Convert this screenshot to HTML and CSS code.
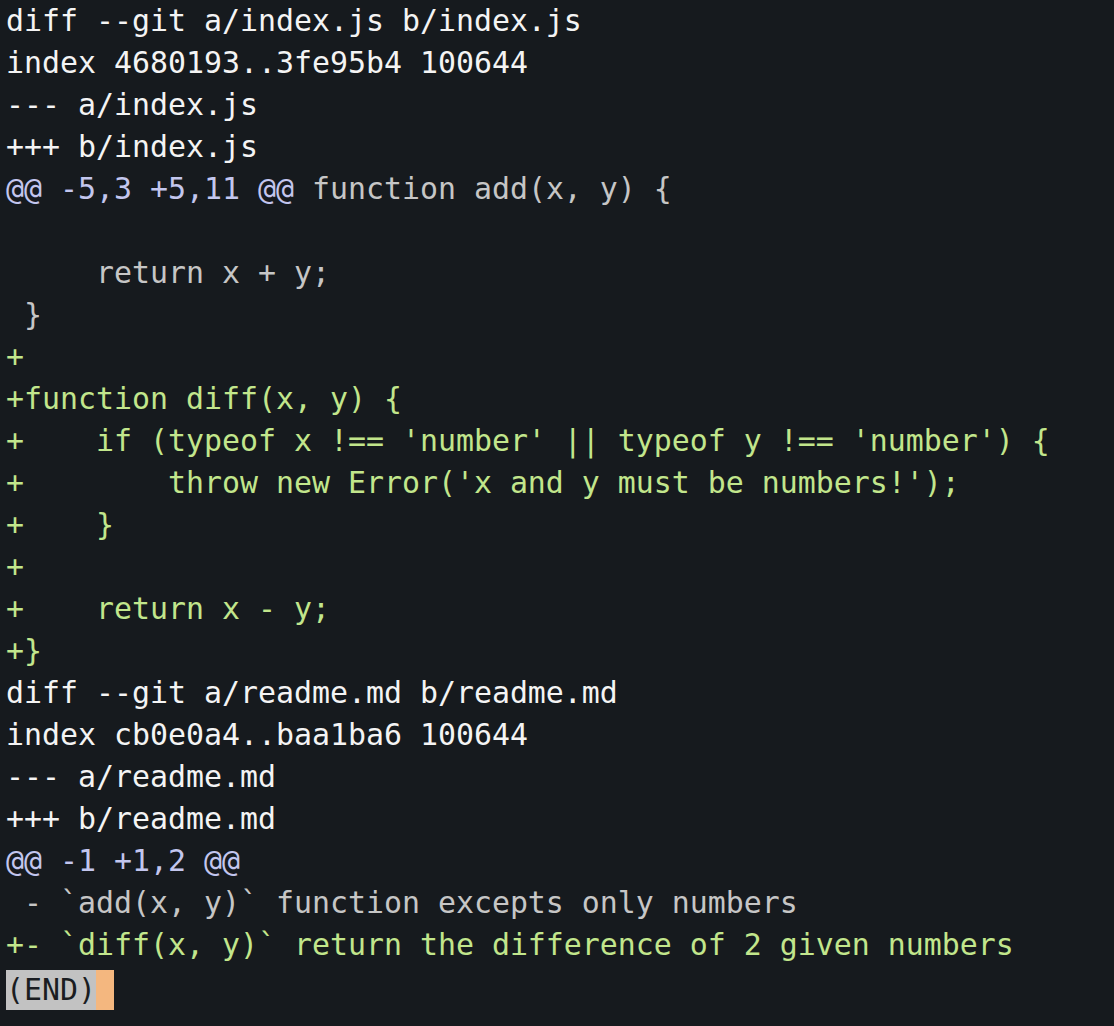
FILE: index.html
```html
<!DOCTYPE html>
<html>
<head>
<meta charset="utf-8">
<link rel="stylesheet" href="styles.css">
</head>
<body>
<div class="term">
<div class="ln meta">diff --git a/index.js b/index.js</div>
<div class="ln meta">index 4680193..3fe95b4 100644</div>
<div class="ln meta">--- a/index.js</div>
<div class="ln meta">+++ b/index.js</div>
<div class="ln"><span class="hunk">@@ -5,3 +5,11 @@</span><span class="ctx"> function add(x, y) {</span></div>
<div class="ln ctx"> </div>
<div class="ln ctx">     return x + y;</div>
<div class="ln ctx"> }</div>
<div class="ln add">+</div>
<div class="ln add">+function diff(x, y) {</div>
<div class="ln add">+    if (typeof x !== 'number' || typeof y !== 'number') {</div>
<div class="ln add">+        throw new Error('x and y must be numbers!');</div>
<div class="ln add">+    }</div>
<div class="ln add">+</div>
<div class="ln add">+    return x - y;</div>
<div class="ln add">+}</div>
<div class="ln meta">diff --git a/readme.md b/readme.md</div>
<div class="ln meta">index cb0e0a4..baa1ba6 100644</div>
<div class="ln meta">--- a/readme.md</div>
<div class="ln meta">+++ b/readme.md</div>
<div class="ln hunk">@@ -1 +1,2 @@</div>
<div class="ln ctx"> - `add(x, y)` function excepts only numbers</div>
<div class="ln add">+- `diff(x, y)` return the difference of 2 given numbers</div>
<div class="ln endline"><span class="end">(END)</span><span class="cursor"> </span></div>
</div>
</body>
</html>
```

FILE: styles.css
```css
html, body {
  margin: 0;
  padding: 0;
  background: #161a1e;
}
.term {
  padding: 0 0 0 6px;
  font-family: "DejaVu Sans Mono", "Liberation Mono", monospace;
  font-size: 29.9px;
  line-height: 42px;
  color: #c9c9c9;
  min-height: 1026px;
  box-sizing: border-box;
}
.ln {
  white-space: pre;
  height: 42px;
}
.meta {
  color: #f4f4f4;
}
.hunk {
  color: #c3c6ee;
}
.ctx {
  color: #c6c6c6;
}
.add {
  color: #c2e68c;
}
.endline {
  padding-top: 4px;
  display: flex;
  height: 40px;
}
.end {
  display: inline-block;
  height: 40px;
  line-height: 40px;
  background: #c2c2c2;
  color: #1a1d21;
}
.cursor {
  display: inline-block;
  width: 18px;
  height: 40px;
  background: #f4b77f;
}
```
